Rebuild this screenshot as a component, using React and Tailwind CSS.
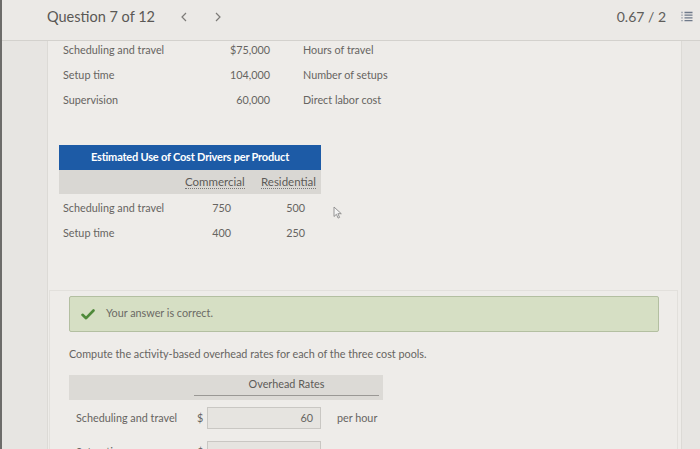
import React from 'react';

const font = { fontFamily: 'Lato, "Open Sans", sans-serif' };

const costPools = [
  { name: 'Scheduling and travel', amount: '$75,000', driver: 'Hours of travel' },
  { name: 'Setup time', amount: '104,000', driver: 'Number of setups' },
  { name: 'Supervision', amount: '60,000', driver: 'Direct labor cost' },
];

const driverUse = [
  { name: 'Scheduling and travel', commercial: '750', residential: '500' },
  { name: 'Setup time', commercial: '400', residential: '250' },
];

const rates = [
  { name: 'Scheduling and travel', value: '60', unit: 'per hour' },
  { name: 'Setup time', value: '', unit: '' },
];

const ListIcon = () => (
  <svg width="12" height="11" viewBox="0 0 12 11" fill="none" stroke="#6f7a8a" strokeWidth="1.3">
    <path d="M0.5 1.5h1M0.5 4.2h1M0.5 6.9h1M0.5 9.6h1" />
    <path d="M3.5 1.5h8M3.5 4.2h8M3.5 6.9h8M3.5 9.6h8" />
  </svg>
);

const Chevron = ({ dir }) => (
  <svg width="6" height="10" viewBox="0 0 6 10" fill="none" stroke="#7d7b78" strokeWidth="1.2">
    <path d={dir === 'left' ? 'M5 1L1 5l4 4' : 'M1 1l4 4-4 4'} />
  </svg>
);

const Check = () => (
  <svg width="14" height="11" viewBox="0 0 14 11" fill="none">
    <path d="M1.5 5.8l3.6 3.4L12.5 1.5" stroke="#4f8a3a" strokeWidth="2.6" strokeLinecap="round" strokeLinejoin="round" />
  </svg>
);

const Pointer = () => (
  <svg width="10" height="13" viewBox="0 0 10 13" fill="#f4f4f4" stroke="#8a8a8a" strokeWidth="0.9">
    <path d="M1 1v9.5l2.4-2.2 1.7 3.8 1.5-.7-1.7-3.7H8.3z" />
  </svg>
);

const App = () => {
  return (
    <div className="w-[700px] min-h-[449px] bg-[#e7e5e2] border-l-2 border-[#6d6c6a] text-[#666461]" style={font}>
      {/* Header */}
      <div className="h-[41px] flex items-center bg-[#ebe9e6] border-b border-[#d3d1cd] pl-[45px] pr-[7px]">
        <span className="text-[14.5px] text-[#5a5855] -mt-[7px]">Question 7 of 12</span>
        <span className="ml-[26px] -mt-[6px]"><Chevron dir="left" /></span>
        <span className="ml-[28px] -mt-[6px]"><Chevron dir="right" /></span>
        <span className="ml-auto -mt-[7px] text-[14px] text-[#5f5d5a]">0.67 / 2</span>
        <span className="ml-[15px] -mt-[7px]"><ListIcon /></span>
      </div>

      <div className="flex">
        <div className="w-[45px] shrink-0" />
        {/* Main panel */}
        <div className="w-[635px] bg-[#eeece9] border-x border-[#dcdad6] pb-[40px]">
          {/* Cost pools */}
          <div className="pl-[15px] text-[10.8px]">
            {costPools.map((row) => (
              <div key={row.name} className="h-[25px] flex items-start pt-[1px]">
                <span className="w-[150px]">{row.name}</span>
                <span className="w-[57px] text-right">{row.amount}</span>
                <span className="pl-[33px]">{row.driver}</span>
              </div>
            ))}
          </div>

          {/* Estimated use table */}
          <div className="relative ml-[11px] mt-[29px] w-[262px] text-[10.8px]">
            <div className="h-[25px] bg-[#1d5ba6] flex items-center justify-center text-white font-bold text-[11px] tracking-[-0.2px]">
              Estimated Use of Cost Drivers per Product
            </div>
            <div className="h-[24px] bg-[#d9d7d3] grid grid-cols-[126px_67px_69px] items-center text-[11.5px] text-[#5d5b58]">
              <span />
              <span className="text-right pr-[10px]">
                <span className="border-b border-dotted border-[#777]">Commercial</span>
              </span>
              <span className="text-right pr-[5px]">
                <span className="border-b border-dotted border-[#777]">Residential</span>
              </span>
            </div>
            <div className="pt-[2px]">
              {driverUse.map((row) => (
                <div key={row.name} className="h-[25px] grid grid-cols-[126px_67px_69px] items-center">
                  <span className="pl-[4px]">{row.name}</span>
                  <span className="text-right pr-[21px]">{row.commercial}</span>
                  <span className="text-right pr-[16px]">{row.residential}</span>
                </div>
              ))}
            </div>
            <div className="absolute left-[274px] top-[61px]">
              <Pointer />
            </div>
          </div>

          {/* Part b card */}
          <div className="ml-[1px] mr-[3px] mt-[44px] border-t border-x border-[#e2e0dc] pt-[5px] pl-[19px] pr-[18px] text-[10.8px]">
            <div className="h-[36px] bg-[#d6dfc4] border border-[#b3bfa1] rounded-[2px] flex items-center pl-[11px]">
              <Check />
              <span className="ml-[11px] -mt-[2px] text-[#6b6a64]">Your answer is correct.</span>
            </div>

            <p className="mt-[14px] leading-[16px]">
              Compute the activity-based overhead rates for each of the three cost pools.
            </p>

            <div className="mt-[13px] w-[314px] h-[25px] bg-[#dcdad6] flex items-end pb-[4px]">
              <div className="w-[125px]" />
              <div className="w-[185px] text-center border-b border-[#9a9895] pb-[3px] text-[#5d5b58]">
                Overhead Rates
              </div>
            </div>

            <div className="pt-[7px]">
              {rates.map((row) => (
                <div key={row.name} className="h-[22px] mb-[12px] flex items-center">
                  <span className="w-[128px] pl-[7px]">{row.name}</span>
                  <span className="w-[10px]">$</span>
                  <div className="w-[114px] h-[22px] bg-[#e6e4e0] border border-[#c9c7c3] flex items-center justify-end pr-[7px]">
                    {row.value}
                  </div>
                  <span className="ml-[16px]">{row.unit}</span>
                </div>
              ))}
            </div>
          </div>
        </div>
        <div className="w-[18px] shrink-0" />
      </div>
    </div>
  );
};

export default App;
